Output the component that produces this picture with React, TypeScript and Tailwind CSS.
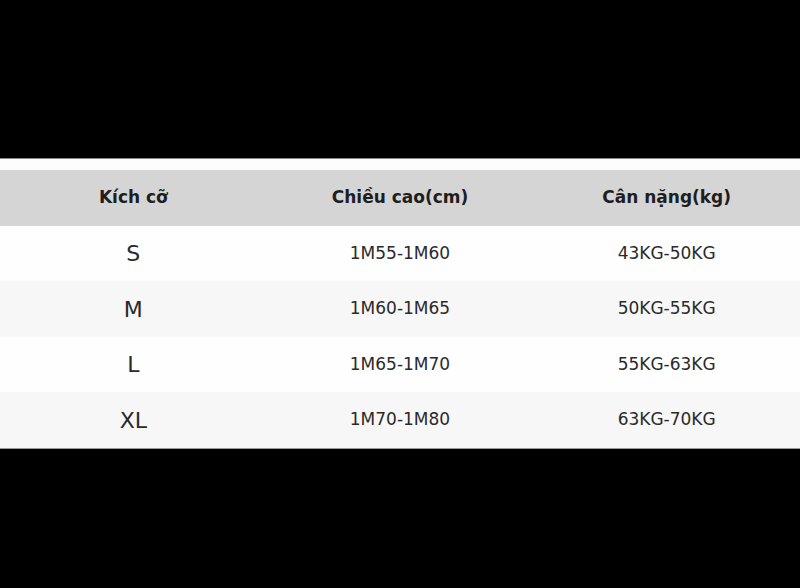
import React from "react";

const rows = [
  ["S", "1M55-1M60", "43KG-50KG"],
  ["M", "1M60-1M65", "50KG-55KG"],
  ["L", "1M65-1M70", "55KG-63KG"],
  ["XL", "1M70-1M80", "63KG-70KG"],
];

export default function App() {
  return (
    <div className="w-[800px] h-[588px] bg-black flex flex-col" style={{ fontFamily: '"DejaVu Sans", sans-serif' }}>
      <div className="h-[158px] shrink-0" />
      <div className="h-[1px] bg-[#8a8a8a] shrink-0" />
      <div className="h-[11px] bg-[#fdfdfd] shrink-0" />
      <div className="grid grid-cols-3 h-[56px] bg-[#d5d5d5] items-center text-[17px] font-bold text-[#1e1e1e] shrink-0">
        <div className="text-center">Kích cỡ</div>
        <div className="text-center">Chiều cao(cm)</div>
        <div className="text-center">Cân nặng(kg)</div>
      </div>
      {rows.map((r, i) => (
        <div
          key={r[0]}
          className={
            "grid grid-cols-3 items-center text-[#2a2a2a] shrink-0 " +
            (i % 2 === 0 ? "bg-[#fefefe] h-[55px]" : "bg-[#f7f7f7] h-[56px]")
          }
        >
          <div className="text-center text-[22px]">{r[0]}</div>
          <div className="text-center text-[17px]">{r[1]}</div>
          <div className="text-center text-[17px]">{r[2]}</div>
        </div>
      ))}
      <div className="h-[1px] bg-[#9a9a9a] shrink-0" />
    </div>
  );
}
